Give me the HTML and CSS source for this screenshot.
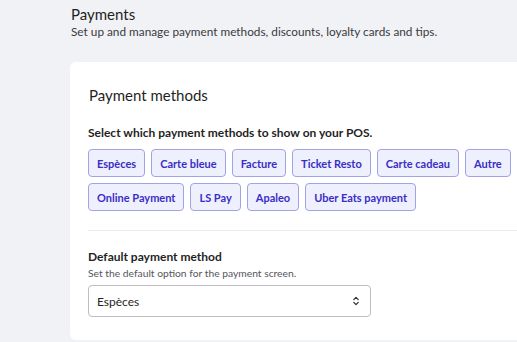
FILE: index.html
```html
<!DOCTYPE html>
<html lang="en">
<head>
    <meta charset="UTF-8">
    <meta name="viewport" content="width=device-width, initial-scale=1.0">
    <title>Payments</title>
    <link rel="stylesheet" href="styles.css">
</head>
<body>

    <div class="page">
        <header class="page-header">
            <h1>Payments</h1>
            <p>Set up and manage payment methods, discounts, loyalty cards and tips.</p>
        </header>

        <section class="card">
            <h2>Payment methods</h2>

            <div class="methods">
                <h3>Select which payment methods to show on your POS.</h3>
                <div class="chips">
                    <button class="chip">Espèces</button>
                    <button class="chip">Carte bleue</button>
                    <button class="chip">Facture</button>
                    <button class="chip">Ticket Resto</button>
                    <button class="chip">Carte cadeau</button>
                    <button class="chip">Autre</button>
                    <button class="chip">Online Payment</button>
                    <button class="chip">LS Pay</button>
                    <button class="chip">Apaleo</button>
                    <button class="chip">Uber Eats payment</button>
                </div>
            </div>

            <div class="default-method">
                <h3>Default payment method</h3>
                <p>Set the default option for the payment screen.</p>
                <div class="select">
                    <span>Espèces</span>
                    <svg width="8" height="12" viewBox="0 0 8 12" fill="none" stroke="#333" stroke-width="1.3" stroke-linecap="round" stroke-linejoin="round">
                        <path d="M1.8 4.6 L4 2.4 L6.2 4.6"/>
                        <path d="M1.8 7.4 L4 9.6 L6.2 7.4"/>
                    </svg>
                </div>
            </div>
        </section>
    </div>

</body>
</html>
```

FILE: styles.css
```css
body {
    margin: 0;
    padding: 0;
    font-family: Lato, "Open Sans", sans-serif;
    background-color: #f1f2f6;
    color: #1f1f24;
    overflow: hidden;
    height: 342px;
}

.page {
    padding: 4px 0 0 70px;
    width: 480px;
}

.page-header {
    padding-left: 1px;
}

.page-header h1 {
    margin: 0;
    font-size: 15px;
    font-weight: 400;
    line-height: 20px;
}

.page-header p {
    margin: 0;
    font-size: 11.8px;
    line-height: 16px;
    color: #3a3a40;
}

.card {
    margin-top: 22px;
    background: #ffffff;
    border-radius: 6px;
    padding: 23px 0 23px 18px;
}

.card h2 {
    margin: 0 0 0 1px;
    font-size: 15px;
    font-weight: 400;
    line-height: 20px;
}

.methods {
    margin-top: 20px;
    padding-bottom: 19px;
    border-bottom: 1px solid #ebecef;
}

h3 {
    margin: 0;
    font-size: 12px;
    font-weight: 700;
    line-height: 16px;
}

.chips {
    display: flex;
    flex-wrap: wrap;
    gap: 6px;
    margin-top: 8px;
}

.chip {
    height: 28px;
    padding: 0 8px;
    font-family: inherit;
    font-size: 11px;
    font-weight: 700;
    color: #3a2ec6;
    background: #eef0fe;
    border: 1px solid #a2a3e4;
    border-radius: 4px;
    cursor: pointer;
}

.default-method {
    padding-top: 18px;
}

.default-method p {
    margin: 1px 0 0;
    font-size: 10.3px;
    line-height: 14px;
    color: #55555c;
}

.select {
    margin-top: 5px;
    width: 283px;
    height: 32px;
    box-sizing: border-box;
    border: 1px solid #bdbdc2;
    border-radius: 4px;
    display: flex;
    align-items: center;
    justify-content: space-between;
    padding: 0 10px 0 8px;
    font-size: 12px;
}
```
